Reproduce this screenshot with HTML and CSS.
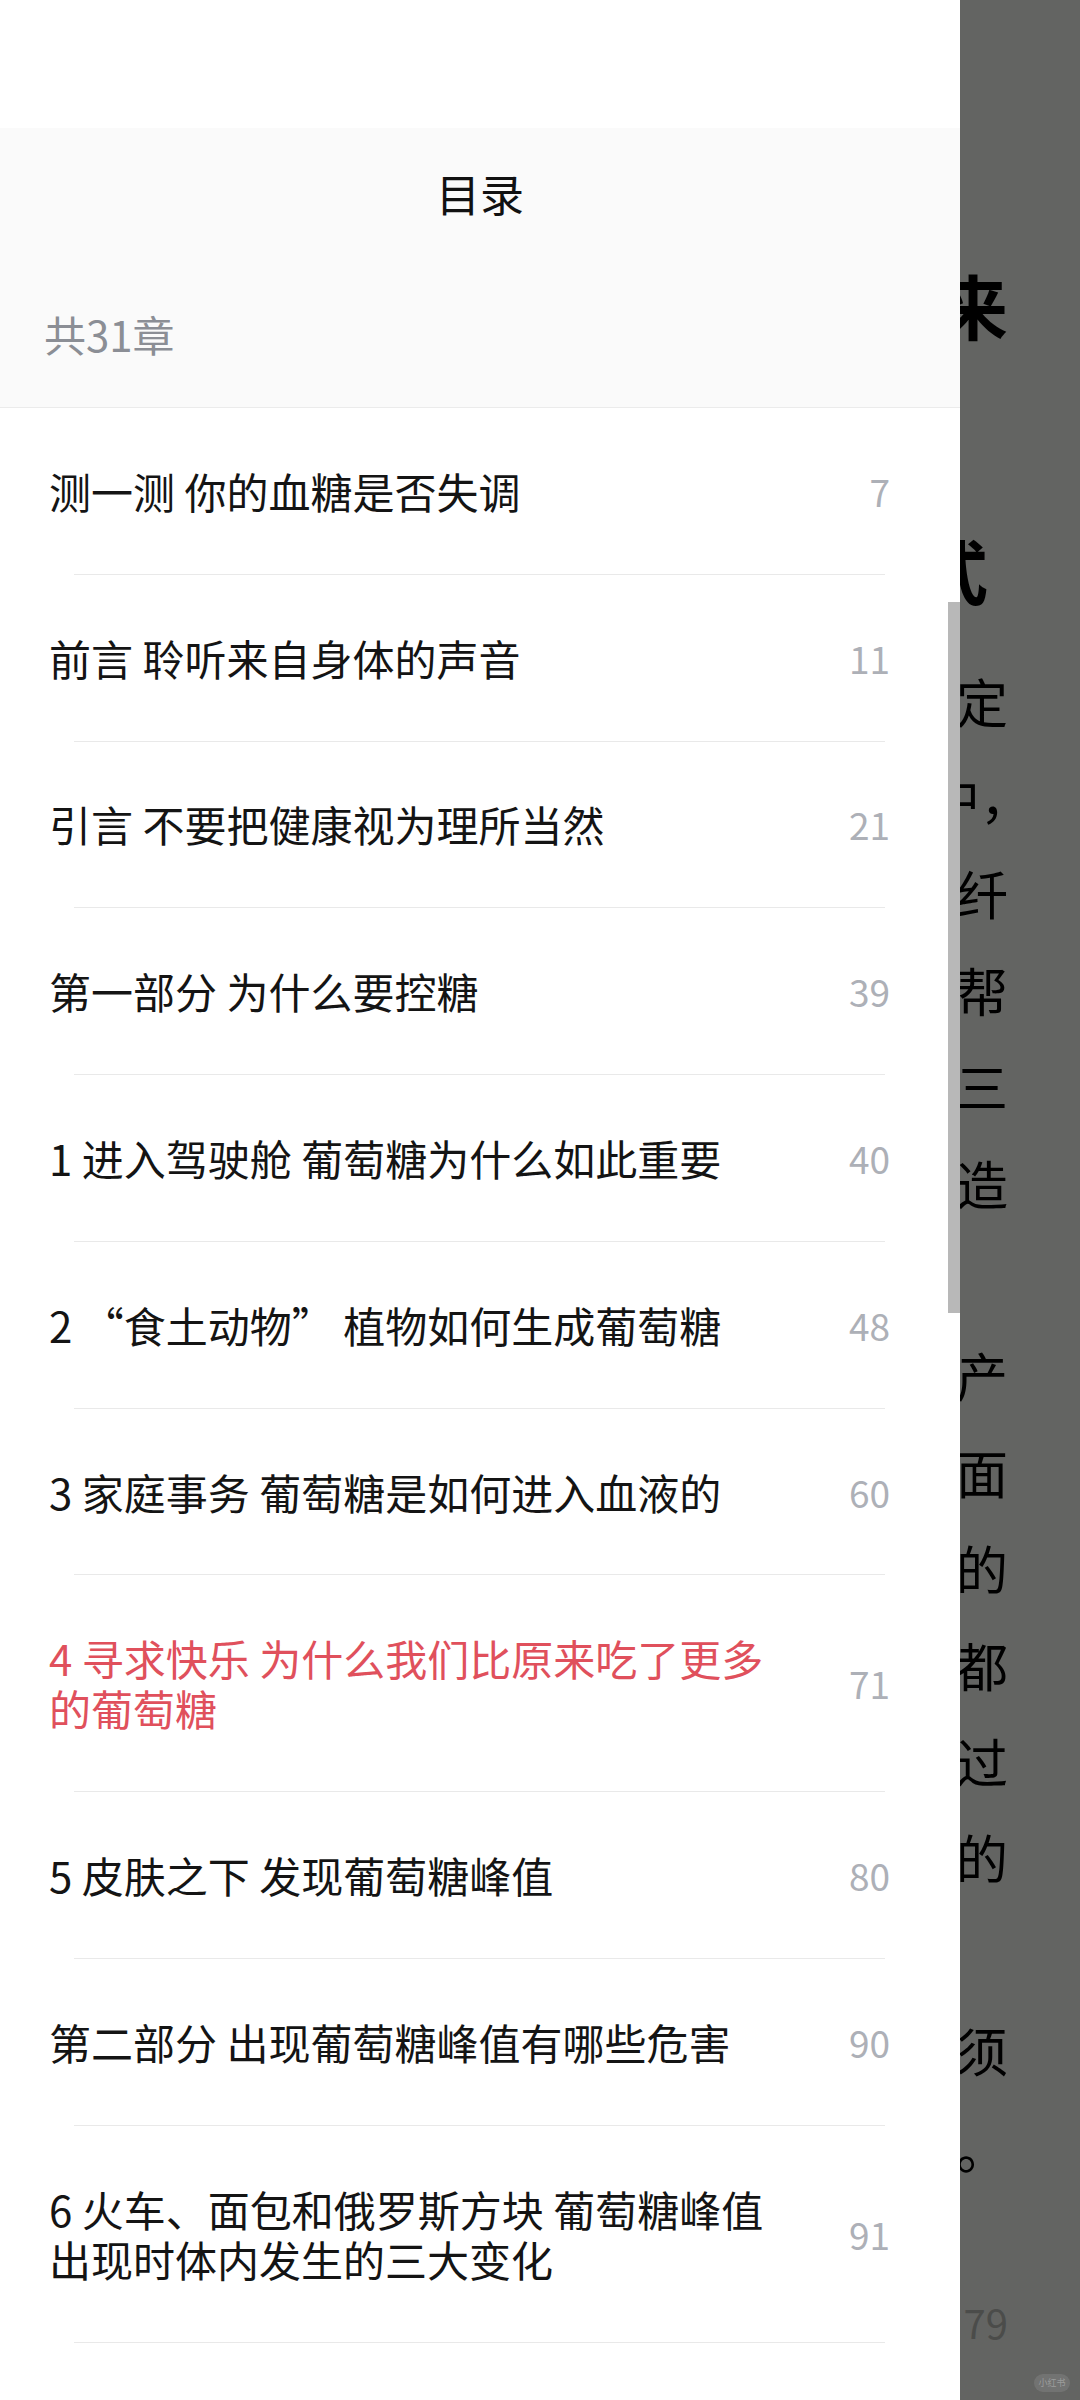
FILE: index.html
```html
<!DOCTYPE html>
<html lang="zh-CN">
<head>
<meta charset="utf-8">
<title>目录</title>
<link rel="stylesheet" href="styles.css">
</head>
<body>
<div class="screen">
  <main class="reader">
    <div class="reader-heading">
      <p>来</p>
      <p>&nbsp;</p>
      <p class="short">式</p>
    </div>
    <div class="reader-body">
      <p>定</p>
      <p class="hang">中，</p>
      <p>纤</p>
      <p>帮</p>
      <p>三</p>
      <p>造</p>
      <p class="blank">&nbsp;</p>
      <p>产</p>
      <p>面</p>
      <p>的</p>
      <p>都</p>
      <p>过</p>
      <p>的</p>
      <p class="blank">&nbsp;</p>
      <p>须</p>
      <p>。</p>
    </div>
    <div class="reader-page">79</div>
    <span class="watermark">小红书</span>
  </main>

  <aside class="drawer">
    <header class="toc-header">
      <h1 class="toc-title">目录</h1>
      <p class="toc-count">共31章</p>
    </header>
    <ul class="toc-list">
      <li class="toc-item"><span class="toc-name">测一测 你的血糖是否失调</span><span class="toc-page">7</span></li>
      <li class="toc-item"><span class="toc-name">前言 聆听来自身体的声音</span><span class="toc-page">11</span></li>
      <li class="toc-item"><span class="toc-name">引言 不要把健康视为理所当然</span><span class="toc-page">21</span></li>
      <li class="toc-item"><span class="toc-name">第一部分 为什么要控糖</span><span class="toc-page">39</span></li>
      <li class="toc-item"><span class="toc-name">1 进入驾驶舱 葡萄糖为什么如此重要</span><span class="toc-page">40</span></li>
      <li class="toc-item"><span class="toc-name">2 “食土动物” 植物如何生成葡萄糖</span><span class="toc-page">48</span></li>
      <li class="toc-item"><span class="toc-name">3 家庭事务 葡萄糖是如何进入血液的</span><span class="toc-page">60</span></li>
      <li class="toc-item is-current"><span class="toc-name">4 寻求快乐 为什么我们比原来吃了更多的葡萄糖</span><span class="toc-page">71</span></li>
      <li class="toc-item"><span class="toc-name">5 皮肤之下 发现葡萄糖峰值</span><span class="toc-page">80</span></li>
      <li class="toc-item"><span class="toc-name">第二部分 出现葡萄糖峰值有哪些危害</span><span class="toc-page">90</span></li>
      <li class="toc-item"><span class="toc-name">6 火车、面包和俄罗斯方块 葡萄糖峰值出现时体内发生的三大变化</span><span class="toc-page">91</span></li>
    </ul>
    <div class="scrollbar"></div>
  </aside>
</div>
</body>
</html>
```
FILE: styles.css
```css
html, body {
  margin: 0;
  padding: 0;
}

body {
  font-family: "Noto Sans CJK SC", "Noto Sans", sans-serif;
  background: #636462;
}

.screen {
  position: relative;
  width: 1080px;
  height: 2400px;
  overflow: hidden;
}

/* ---------- dimmed reading page behind the drawer ---------- */
.reader {
  position: relative;
  box-sizing: border-box;
  height: 2400px;
  padding: 239px 72px 0 0;
  background: #636462;
  color: #000;
  text-align: right;
}

.reader p {
  margin: 0;
  white-space: nowrap;
}

.reader-heading {
  font-size: 70px;
  line-height: 132.5px;
  font-weight: 700;
}

.reader-heading .short {
  margin-right: 20px;
}

.reader-body {
  margin-top: 16px;
  font-size: 52px;
  line-height: 96.4px;
}

.reader-body .hang {
  margin-right: -24px;
}

.reader-page {
  margin-top: 102px;
  font-size: 40px;
  line-height: 50px;
  color: #4b4c4a;
}

.watermark {
  position: absolute;
  right: 10px;
  bottom: 8px;
  width: 36px;
  height: 18px;
  border-radius: 9px;
  background: rgba(255, 255, 255, 0.1);
  color: rgba(255, 255, 255, 0.3);
  font-size: 9px;
  line-height: 18px;
  text-align: center;
}

/* ---------- table of contents drawer ---------- */
.drawer {
  position: absolute;
  top: 0;
  left: 0;
  width: 960px;
  height: 2400px;
  padding-top: 128px;
  box-sizing: border-box;
  background: #fff;
  overflow: hidden;
}

.toc-header {
  padding: 35px 0 43px;
  background: #fafafa;
  border-bottom: 1px solid #ebebeb;
}

.toc-title {
  margin: 0;
  text-align: center;
  font-size: 44px;
  font-weight: 400;
  line-height: 60px;
  color: #111;
}

.toc-count {
  margin: 81px 0 0;
  padding-left: 44px;
  font-size: 42px;
  line-height: 60px;
  color: #8b8e95;
}

.toc-list {
  margin: 0;
  padding: 0;
  list-style: none;
}

.toc-item {
  display: flex;
  align-items: center;
  margin: 0 75px 0 74px;
  padding: 57.9px 0;
  border-bottom: 1px solid #e9e9e9;
}

.toc-name {
  flex: 1 1 auto;
  margin-left: -25px;
  padding-right: 25px;
  font-size: 42px;
  line-height: 50px;
  color: #141414;
}

.toc-page {
  flex: 0 0 80px;
  margin-right: -5px;
  text-align: right;
  font-size: 37px;
  line-height: 50px;
  color: #adb0b7;
}

.is-current .toc-name {
  color: #e0505c;
}

.scrollbar {
  position: absolute;
  left: 948px;
  top: 602px;
  width: 12px;
  height: 711px;
  background: #b8b8b8;
}
```
